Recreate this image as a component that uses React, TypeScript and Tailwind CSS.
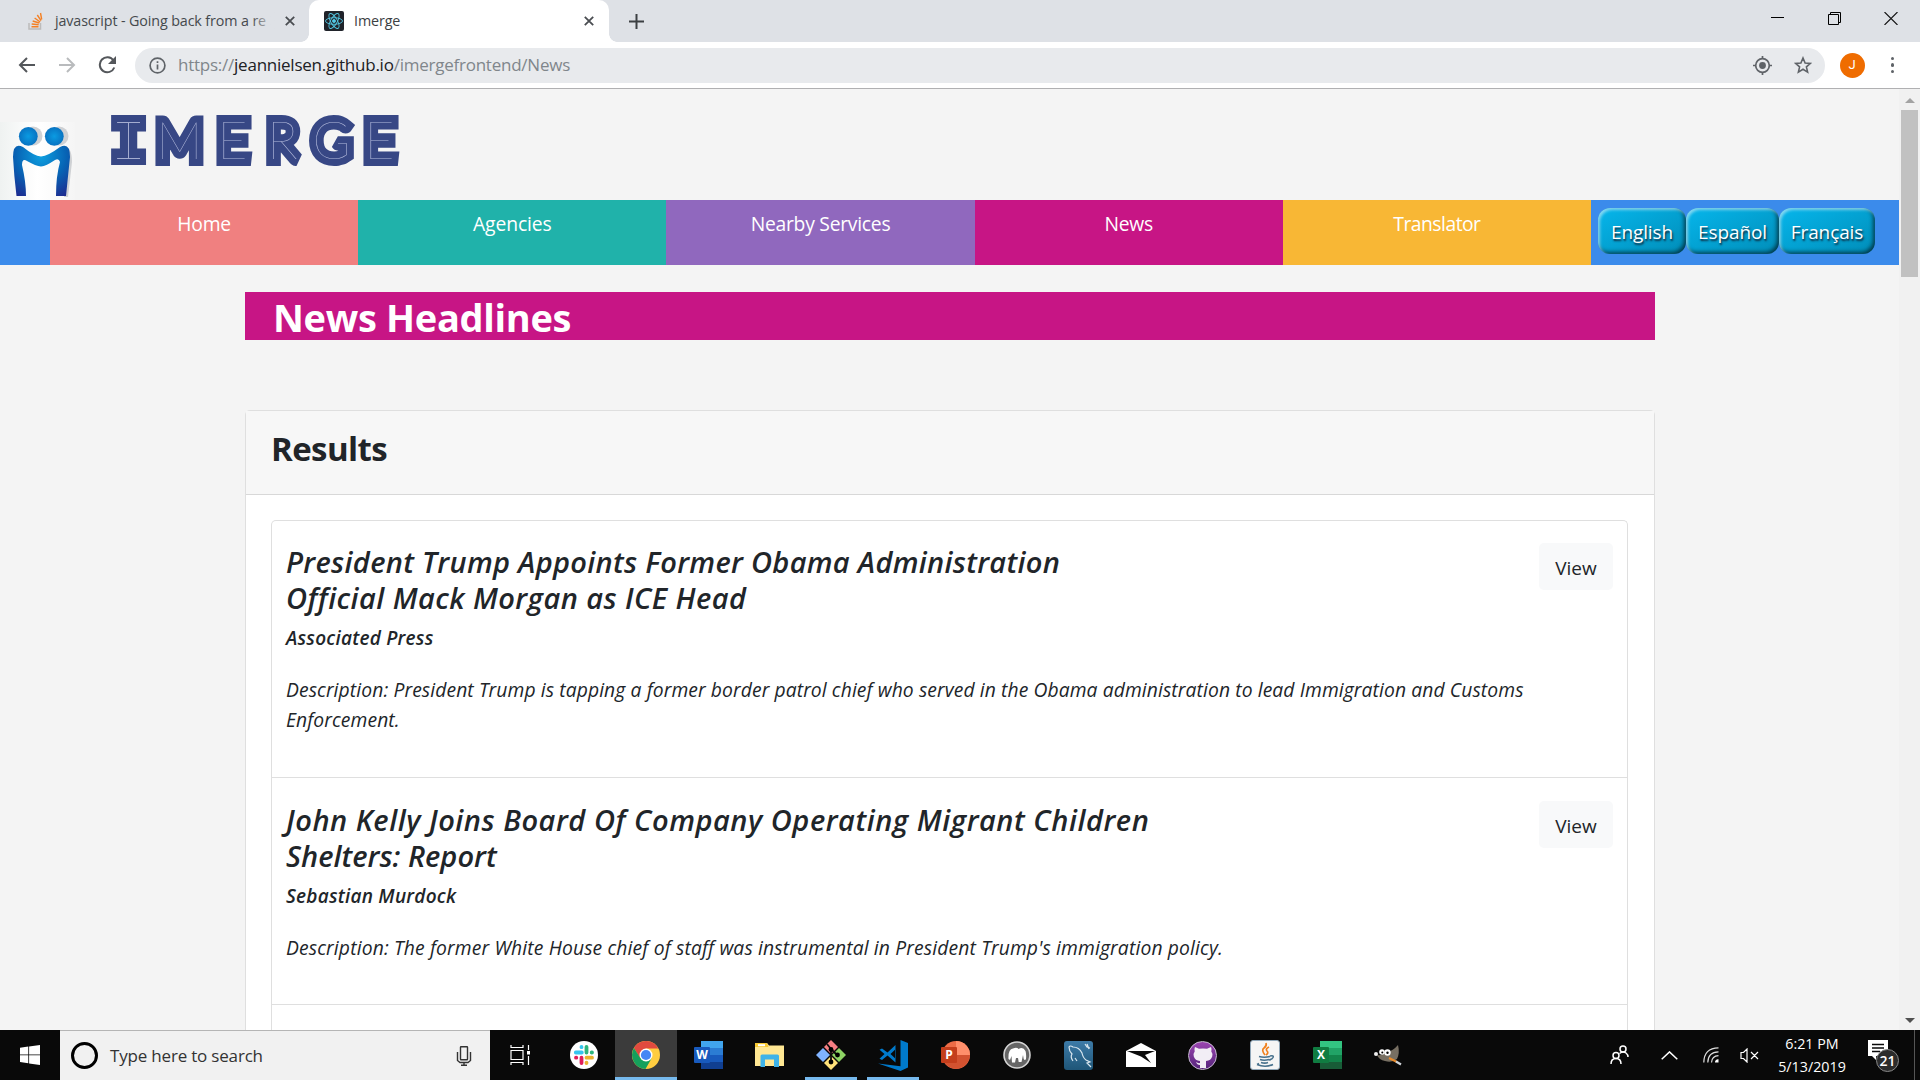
import type { ReactNode } from "react";

function CloseX() {
  return (
    <svg width="10" height="10" viewBox="0 0 10 10" stroke="#4a4d51" strokeWidth="1.8">
      <path d="M.8.8l8.4 8.4M9.2.8L.8 9.2" />
    </svg>
  );
}

function TabStrip() {
  return (
    <div className="flex h-[42px] shrink-0 items-stretch bg-[#dee1e6]">
      <div className="flex w-[309px] items-center pl-7">
        <svg width="15" height="18" viewBox="0 0 15 18" fill="none">
          <path d="M1 11v6h11.500v-6" stroke="#bcbbbb" strokeWidth="1.500" />
          <path d="M3.500 14.700h7M3.700 12l7 .8M4.700 9l6.600 2M6.600 6l5.600 4M9.300 3l3.700 5.600M12.500 1l1.200 6.500" stroke="#f48024" strokeWidth="1.400" />
        </svg>
        <div className="relative ml-3 w-[220px] whitespace-nowrap text-[14.300px] tracking-[-0.120px] text-[#45494d]">
          javascript - Going back from a re
          <div className="absolute inset-y-0 right-0 w-6 bg-linear-to-r from-transparent to-[#dee1e6]" />
        </div>
        <div className="ml-[10px]"><CloseX /></div>
      </div>
      <div className="relative flex w-[300px] items-center rounded-t-[10px] bg-white pl-[15px]">
        <i className="absolute right-full bottom-0 size-2 bg-[radial-gradient(circle_at_0_0,transparent_7.500px,white_8px)]" />
        <i className="absolute bottom-0 left-full size-2 bg-[radial-gradient(circle_at_100%_0,transparent_7.500px,white_8px)]" />
        <svg width="20" height="20" viewBox="0 0 20 20" fill="none" stroke="#53c7e3" strokeWidth=".9">
          <rect width="20" height="20" rx="2" fill="#20232a" stroke="none" />
          <ellipse cx="10" cy="10" rx="8.500" ry="3.300" />
          <ellipse cx="10" cy="10" rx="8.500" ry="3.300" transform="rotate(60 10 10)" />
          <ellipse cx="10" cy="10" rx="8.500" ry="3.300" transform="rotate(120 10 10)" />
          <circle cx="10" cy="10" r="1.500" fill="#53c7e3" />
        </svg>
        <span className="ml-[10px] flex-1 text-[14.300px] tracking-[-0.100px] text-[#3c4043]">Imerge</span>
        <div className="mr-[15px]"><CloseX /></div>
      </div>
      <div className="flex flex-1 items-center pl-[20px]">
        <svg width="15" height="15" viewBox="0 0 15 15" stroke="#3c4043" strokeWidth="2"><path d="M7.500 0v15M0 7.500h15" /></svg>
      </div>
      <div className="flex items-start gap-[43px] pr-[22px] pt-3">
        <svg className="-ml-px" width="14" height="13" viewBox="0 0 14 13" stroke="#000"><path d="M0 5.500h13" /></svg>
        <svg width="13" height="13" viewBox="0 0 13 13" fill="none" stroke="#000"><path d="M.5 2.500h10v10h-10zM2.500 2.500v-2h10v10h-2" /></svg>
        <svg width="14" height="13" viewBox="0 0 14 13" stroke="#111" strokeWidth="1.100"><path d="M.5 0l13 13M13.500 0l-13 13" /></svg>
      </div>
    </div>
  );
}

function Toolbar() {
  return (
    <div className="flex h-[47px] shrink-0 items-center border-b border-[#b0b0b2] bg-white pl-[18px] pr-[26px]">
      <svg width="17" height="16" viewBox="0 0 17 16" fill="none" stroke="#54575b" strokeWidth="2"><path d="M17 8H2M9 1L2 8l7 7" /></svg>
      <svg className="ml-6" width="17" height="16" viewBox="0 0 17 16" fill="none" stroke="#b9bbbd" strokeWidth="2"><path d="M0 8h15M8 1l7 7-7 7" /></svg>
      <svg className="ml-[22px]" width="19" height="18" viewBox="0 0 19 18" fill="none" stroke="#54575b" strokeWidth="2">
        <path d="M15.500 4.500A7.500 7.500 0 1 0 16.300 11.500" />
        <path d="M18 0v8h-8z" fill="#54575b" stroke="none" />
      </svg>
      <div className="ml-[18px] flex h-[35px] flex-1 items-center rounded-full bg-[#e8eaed] pl-[14px] pr-[13px]">
        <svg width="17" height="17" viewBox="0 0 17 17" fill="none" stroke="#5f6368" strokeWidth="1.700">
          <circle cx="8.500" cy="8.500" r="7.400" /><path d="M8.500 7.500v5M8.500 4.200v1.900" />
        </svg>
        <span className="ml-3 flex-1 text-[17px] tracking-[-0.240px] text-[#80868b]">
          https://<span className="text-[#202124]">jeannielsen.github.io</span>/imergefrontend/News
        </span>
        <svg width="19" height="19" viewBox="0 0 19 19" fill="none" stroke="#5f6368" strokeWidth="1.700">
          <circle cx="9.500" cy="9.500" r="6.800" /><circle cx="9.500" cy="9.500" r="3.400" fill="#5f6368" stroke="none" />
          <path d="M9.500 0v3M9.500 16v3M0 9.500h3M16 9.500h3" />
        </svg>
        <svg className="ml-[22px]" width="18" height="18" viewBox="0 0 18 18" fill="none" stroke="#5f6368" strokeWidth="1.600">
          <path d="M9 2l2.100 5 5.300.4-4 3.500 1.200 5.200L9 13.300l-4.600 2.800 1.200-5.200-4-3.500 5.300-.4z" />
        </svg>
      </div>
      <div className="ml-[15px] flex size-[25px] items-center justify-center rounded-full bg-[#ef6c00] font-['Roboto'] text-[13px] text-white">J</div>
      <div className="ml-[26px] flex flex-col gap-[3px]">
        <i className="size-[3.500px] rounded-full bg-[#5f6368]" />
        <i className="size-[3.500px] rounded-full bg-[#5f6368]" />
        <i className="size-[3.500px] rounded-full bg-[#5f6368]" />
      </div>
    </div>
  );
}

function PeopleLogo() {
  return (
    <svg className="mt-[33px] block" width="75" height="78" viewBox="0 0 75 78">
      <defs>
        <linearGradient id="paper"><stop offset="0" stopColor="#eff2f1" /><stop offset=".5" stopColor="#fff" /><stop offset="1" stopColor="#f5f5f5" /></linearGradient>
        <radialGradient id="head"><stop offset="0" stopColor="#0a9be2" /><stop offset="1" stopColor="#0873c2" /></radialGradient>
        <radialGradient id="body" gradientUnits="userSpaceOnUse" cx="41" cy="34" r="46"><stop offset="0" stopColor="#0d9fe0" /><stop offset=".55" stopColor="#0763b4" /><stop offset="1" stopColor="#1d2b90" /></radialGradient>
      </defs>
      <rect width="75" height="78" fill="url(#paper)" />
      <g fill="#cfd1d4">
        <circle cx="33" cy="14" r="9.500" /><circle cx="59" cy="14" r="9.500" />
        <path d="M62 24q10-1 10 16l-4 35h-4z" />
      </g>
      <circle cx="28.300" cy="14.300" r="9.400" fill="url(#head)" />
      <circle cx="54.300" cy="14.300" r="9.400" fill="url(#head)" />
      <path d="M13 35Q13 20 23 25Q34 34 41 34.500Q48 34 60 25Q70 20 70 35Q68 54 66 74H56Q56 54 60 40Q59 36 55 38Q46 44 41 44.500Q36 44 27 39Q22 36 22 43Q26 60 26 74H16.500Q14 54 13 35z" fill="url(#body)" />
    </svg>
  );
}

const LETTERS: [string, number][] = [["M", 179.5], ["E", 232.5], ["R", 282.5], ["G", 331.5], ["E", 379.5]];

function Wordmark() {
  return (
    <svg className="block" width="320" height="80" viewBox="100 96 320 80" fontFamily="Lato" fontWeight="100" fontSize="51.500" fill="#b5bcdd" stroke="#374785" strokeWidth="14" strokeMiterlimit="2" paintOrder="stroke" textAnchor="middle">
      <defs>
        <pattern id="inline" patternUnits="userSpaceOnUse" x="100" y="96" width="320" height="80">
          <rect width="320" height="80" fill="#374785" stroke="none" />
          <path d="M28.500 26v37M17 26.500h23M17 62.500h23" stroke="#a4acd0" strokeWidth="1" />
        </pattern>
      </defs>
      <text x="128.500" y="159" fontFamily="Liberation Mono" fontWeight="400" fontSize="57" fill="url(#inline)" strokeWidth="12">I</text>
      {LETTERS.map(([c, x], i) => <text key={i} x={x} y="159">{c}</text>)}
    </svg>
  );
}

const NAV = [
  { label: "Home", style: "bg-[#f08080] tracking-[-0.250px]" },
  { label: "Agencies", style: "bg-[#20b2aa] tracking-[-0.100px]" },
  { label: "Nearby Services", style: "bg-[#9068be] tracking-[-0.250px]" },
  { label: "News", style: "bg-[#c71585] tracking-[-0.250px]" },
  { label: "Translator", style: "bg-[#f8b735] tracking-[-0.500px]" },
];

const LANGS = [
  { label: "English", w: "w-[88px]" },
  { label: "Español", w: "w-[93px]" },
  { label: "Français", w: "w-[96px]" },
];

const ARTICLES = [
  {
    title: [
      { t: "President Trump Appoints Former Obama Administration", tracking: "tracking-[0.310px]" },
      { t: "Official Mack Morgan as ICE Head", tracking: "tracking-[0.430px]" },
    ],
    author: "Associated Press",
    text: ["Description: President Trump is tapping a former border patrol chief who served in the Obama administration to lead Immigration and Customs", "Enforcement."],
    box: "h-[257px] pt-[22px]",
    textTracking: "tracking-[0.095px]",
  },
  {
    title: [
      { t: "John Kelly Joins Board Of Company Operating Migrant Children", tracking: "tracking-[0.530px]" },
      { t: "Shelters: Report", tracking: "tracking-[0.020px]" },
    ],
    author: "Sebastian Murdock",
    text: ["Description: The former White House chief of staff was instrumental in President Trump's immigration policy."],
    box: "h-[227px] pt-[23px]",
    textTracking: "tracking-[0.140px]",
  },
];

function Page() {
  return (
    <div className="flex min-h-0 flex-1 bg-[#f4f4f4]">
      <main className="flex min-w-0 flex-1 flex-col overflow-hidden">
        <header className="flex h-[111px] shrink-0">
          <PeopleLogo />
          <div className="ml-[25px] pt-[7px]"><Wordmark /></div>
        </header>
        <nav className="flex h-[65px] shrink-0 bg-[#3b8beb] pl-[50px] text-white">
          {NAV.map((n) => (
            <a key={n.label} className={"flex-1 pt-[10px] text-center text-[19.300px] leading-[28px] " + n.style}>{n.label}</a>
          ))}
          <div className="flex w-[308px] pl-[7px] pt-2">
            {LANGS.map((l) => (
              <button key={l.label} className={"h-[46px] rounded-[12px] bg-linear-to-br from-[#06b6ec] to-[#018db8] pt-[3px] text-[19px] tracking-[-0.100px] [text-shadow:1px_2px_2px_#123] shadow-[inset_2px_2px_3px_rgba(255,255,255,.5),inset_-2px_-2px_4px_rgba(0,0,0,.6)] " + l.w}>
                {l.label}
              </button>
            ))}
          </div>
        </nav>
        <h1 className="ml-[245px] mt-[27px] h-12 w-[1410px] shrink-0 bg-[#c71585] pl-7 text-[38px] leading-[51px] font-bold tracking-[-0.320px] text-white">News Headlines</h1>
        <section className="ml-[245px] mt-[70px] w-[1410px] flex-1 rounded-t-[5px] border border-b-0 border-[#dfdfdf] bg-white">
          <h2 className="h-[84px] border-b border-[#d8d8d8] bg-[#f7f7f7] pl-[25px] pt-[14px] text-[33px] leading-[48px] font-bold tracking-[-0.600px] text-[#212529]">Results</h2>
          <ul className="ml-[25px] mt-[25px] h-[520px] w-[1357px] rounded-t-[5px] border border-b-0 border-[#dfdfdf] text-[#212529] italic">
            {ARTICLES.map((a) => (
              <li key={a.author} className={"flex items-start justify-between border-b border-[#dfdfdf] px-[14px] whitespace-nowrap " + a.box}>
                <div className="pt-px">
                  <h3 className="text-[29px] leading-9 font-semibold">{a.title.map((l) => <span key={l.t} className={"block w-fit " + l.tracking}>{l.t}</span>)}</h3>
                  <h4 className="mt-[10px] w-fit text-[19px] leading-6 font-semibold tracking-[0.230px]">{a.author}</h4>
                  <p className={"mt-[25px] text-[19.300px] leading-[30px] " + a.textTracking}>{a.text.map((t) => <span key={t} className="block w-fit">{t}</span>)}</p>
                </div>
                <button className="-ml-20 h-[47px] w-[74px] shrink-0 rounded-[5px] bg-[#f8f9fa] pt-[3px] text-[19px] not-italic">View</button>
              </li>
            ))}
          </ul>
        </section>
      </main>
      <aside className="flex w-[21px] flex-col items-center justify-between bg-[#f1f1f1]">
        <div className="flex flex-col items-center pt-[9px]">
          <svg width="10" height="5" viewBox="0 0 10 5" fill="#a3a3a3"><path d="M0 5l5-5 5 5z" /></svg>
          <div className="mt-[7px] h-[167px] w-[17px] bg-[#c1c1c1]" />
        </div>
        <svg className="mb-[7px]" width="10" height="5" viewBox="0 0 10 5" fill="#505050"><path d="M0 0l5 5 5-5z" /></svg>
      </aside>
    </div>
  );
}

function Office({ letter, dark, shades, round }: { letter: string; dark: string; shades: string[]; round?: boolean }) {
  return (
    <svg width="30" height="30" viewBox="0 0 30 30">
      {round ? (
        <>
          <circle cx="16" cy="15" r="14" fill={shades[1]} />
          <path d="M16 1a14 14 0 0 1 14 14H16z" fill={shades[0]} />
          <path d="M30 15a14 14 0 0 1-27 5l13-5z" fill={shades[2]} />
        </>
      ) : (
        shades.map((s, i) => <rect key={s} x="8" y={1 + i * 7} width="22" height="7" fill={s} />)
      )}
      <rect x="1" y="7" width="16" height="16" rx="1" fill={dark} />
      <text x="9" y="19.300" textAnchor="middle" fontFamily="Open Sans" fontWeight="700" fontSize="12" fill="#fff">{letter}</text>
    </svg>
  );
}

function Slack() {
  return (
    <svg width="28" height="28" viewBox="0 0 28 28">
      <circle cx="14" cy="14" r="14" fill="#fff" />
      <g strokeWidth="3.800" strokeLinecap="round">
        <path d="M5.800 11.500h6M11.500 5.900v.3" stroke="#36c5f0" />
        <path d="M16.500 6v5.500M22 11.500h-.3" stroke="#2eb67d" />
        <path d="M16.500 16.700H22M16.500 22v-.3" stroke="#ecb22e" />
        <path d="M11.500 16.700V22M6 16.700h.3" stroke="#e01e5a" />
      </g>
    </svg>
  );
}

function Chrome() {
  return (
    <svg width="28" height="28" viewBox="0 0 28 28">
      <circle cx="14" cy="14" r="14" fill="#ffcd40" />
      <path d="M14 7.500h12.400A14 14 0 0 0 1.900 7L8 17z" fill="#e04a3f" />
      <path d="M1.900 7A14 14 0 0 0 13.500 28l6-10.500L8.300 17z" fill="#15a05c" />
      <circle cx="14" cy="14" r="6.500" fill="#fff" /><circle cx="14" cy="14" r="5.100" fill="#4587f4" />
    </svg>
  );
}

const APPS: { id: string; icon: ReactNode; state?: "active" | "open" }[] = [
  { id: "tasks", icon: <svg className="mr-[3px]" width="21" height="20" viewBox="0 0 21 20" fill="none" stroke="#fff" strokeWidth="1.200"><path d="M1 5.500h12v9H1zM1 0v2.500h12V0M1 20v-2.500h12V20M18.500 0v5M18.500 11v9" /><path d="M17 6h3v3.500h-3z" fill="#fff" stroke="none" /></svg> },
  { id: "slack", icon: <Slack /> },
  { id: "chrome", icon: <Chrome />, state: "active" },
  { id: "word", icon: <Office letter="W" dark="#185abd" shades={["#41a5ee", "#2b7cd3", "#185abc", "#103f91"]} /> },
  {
    id: "files",
    icon: (
      <svg width="29" height="26" viewBox="0 0 29 26">
        <path d="M0 1h12l2 2.500h15V24H0z" fill="#ffe793" /><path d="M0 1h12l1.500 4H0z" fill="#f8c932" /><path d="M3 2.200h7v2H3z" fill="#fff" />
        <path d="M5.500 14q0-1.500 1.500-1.500h15.500q1.500 0 1.500 1.500v11h-5v-7.500H10V25H5.500z" fill="#3fb3e8" />
      </svg>
    ),
  },
  {
    id: "git",
    state: "open",
    icon: (
      <svg width="32" height="32" viewBox="0 0 32 32">
        <path d="M16 1l7 7-7 7-7-7z" fill="#f57e82" /><path d="M8 9l7 7-7 7-7-7z" fill="#80b3ff" />
        <path d="M24 9l7 7-7 7-7-7z" fill="#8ed464" /><path d="M16 17l7 7-7 7-7-7z" fill="#ffe27a" />
        <path d="M12 5l4 5v14M16 10l6 6" stroke="#0c0c0c" strokeWidth="1.800" fill="none" />
        <circle cx="16" cy="10.500" r="2.400" /><circle cx="22.500" cy="16" r="2.400" /><circle cx="16" cy="23" r="2.400" />
      </svg>
    ),
  },
  {
    id: "code",
    state: "open",
    icon: (
      <svg width="30" height="31" viewBox="0 0 30 31" fill="#007acc">
        <path d="M22.500 0L30 3v24.500L22.500 31 0 23.500l22.500 2.700z" />
        <path d="M1.500 9.800L4 8.500l5.500 4L17.500 5v17.500L9.500 15.500 4 20l-2.500-1.300L6.500 14zM17 9.800L12.500 14l4.500 4.200z" fillRule="evenodd" />
      </svg>
    ),
  },
  { id: "ppt", icon: <Office round letter="P" dark="#c43e1c" shades={["#ff8f6b", "#ed6c47", "#d35230"]} /> },
  {
    id: "mamp",
    icon: (
      <svg width="28" height="28" viewBox="0 0 28 28">
        <circle cx="14" cy="14" r="13" fill="#666" stroke="#d5d5d5" strokeWidth="1.600" />
        <path d="M5.500 18Q5 8 10 7.500q4-1.500 5.500.5Q20 5 22.500 10q1 3 .5 8-1 2-2.300 0L20 14l-1.500 7h-2.800L15 17l-2 0-1 4.500H9L8.500 15 7 19z" fill="#fff" />
      </svg>
    ),
  },
  { id: "mysql", icon: <div className="flex size-[29px] items-center justify-center rounded-[3px] bg-linear-to-b from-[#3d7ba8] to-[#1f5678]">
    <svg width="27" height="27" viewBox="0 0 27 27" fill="none" stroke="#dbe8f0" strokeWidth="1.200"><path d="M8 19q-3-4-1-7-3-3-3-7 1-2 4 0 6 0 9 6 1 5 4 7l4 2-3 1 4 4M10 16l2 3M20 2l2 3 3 1M22 2l2 5" /></svg>
  </div> },
  { id: "mail", icon: <svg width="30" height="24" viewBox="0 0 30 24"><path d="M0 8L15 0l15 8v16H0z" fill="#fff" /><path d="M1 8h28l-10 4 6 8-10-6.500z" fill="#0b0b0b" /></svg> },
  { id: "github", icon: <div className="flex size-[29px] items-center justify-center rounded-full border-[1.500px] border-[#c9bcd3] bg-linear-to-b from-[#9b45b0] to-[#57247c]">
    <svg width="24" height="26" viewBox="0 0 24 26" fill="#f2eef5"><path d="M4 5l4 1.800q4-.8 8 0L20 5q1 2 .3 4.500 1.700 2 .9 5Q20 18.500 15 19v7H9v-3q-3 0-4-3 2 1.500 4 1V19q-5-.5-6.200-4.500-.8-3 .9-5Q3 7 4 5z" /></svg>
  </div> },
  { id: "java", icon: <div className="flex size-[30px] items-center justify-center rounded-[3px] border border-[#8fa6b8] bg-[#f5f5f5]">
    <svg width="22" height="26" viewBox="0 0 22 26" fill="none"><path d="M12 1q1 3-2 5t1 7M15 5q-4 2-2 4t-1 4" stroke="#f0801d" strokeWidth="1.700" /><path d="M5 14.500q5 1.500 11 0M16 14q4-1 3 1.500-1 2-4 2.500M6 17.500q4 1.500 9 0M7 20.500q4 1.200 7 0M3 22.500q8 3.500 16 0M3 22.500l2-1" stroke="#46708c" strokeWidth="1.600" /></svg>
  </div> },
  { id: "excel", icon: <Office letter="X" dark="#107c41" shades={["#33c481", "#21a366", "#12834a", "#185c37"]} /> },
  {
    id: "gimp",
    icon: (
      <svg width="28" height="22" viewBox="0 0 28 22">
        <path d="M3 11q6 1 9-4 5 2 12-6 2 8-1 14-5 4-12 2-6-1-8-6z" fill="#776f62" />
        <circle cx="2" cy="10" r="2" fill="#eee" /><circle cx="8" cy="8" r="2.800" fill="#fff" /><circle cx="13.500" cy="8.500" r="3.200" fill="#fff" />
        <circle cx="8.300" cy="8.500" r="1" /><circle cx="13.500" cy="8.800" r="1.200" />
        <path d="M15 14l8 4" stroke="#e88b2c" strokeWidth="2" /><path d="M22 17.500l5 3" stroke="#cfd3d8" strokeWidth="2.200" />
      </svg>
    ),
  },
];

function Taskbar() {
  return (
    <footer className="flex h-[50px] shrink-0 items-stretch bg-[#090909] text-white">
      <div className="flex w-[60px] items-center justify-center">
        <svg width="20" height="20" viewBox="0 0 20 20" fill="#fff"><path d="M0 2.800L8.300 1.600v7.900H0zM9.100 1.500L20 0v9.500H9.100zM0 10.300h8.300v7.900L0 17zM9.100 10.300H20V20L9.100 18.400z" /></svg>
      </div>
      <div className="flex w-[430px] items-center border-t border-[#b5b5b5] bg-[#f1f1f1] pl-[11px] pr-[18px]">
        <div className="size-[27px] rounded-full border-[3.500px] border-black" />
        <span className="ml-3 flex-1 text-[17px] tracking-[-0.190px] text-[#333]">Type here to search</span>
        <svg width="16" height="20" viewBox="0 0 16 20" fill="none" stroke="#333" strokeWidth="1.400"><rect x="4.500" y=".7" width="7" height="13" rx=".5" /><path d="M1.500 6v8.500l2.500 2h8l2.500-2V6M8 16.500V19M5 19.200h6" /></svg>
      </div>
      <div className="flex pl-px">
        {APPS.map((a) => (
          <div key={a.id} className={"relative flex w-[61.900px] items-center justify-center " + (a.state === "active" ? "bg-[#3b3b3b]" : "")}>
            {a.icon}
            {a.state === "active" && <div className="absolute inset-x-0 bottom-0 h-[3px] bg-[#76b9ed]" />}
            {a.state === "open" && <div className="absolute inset-x-[5px] bottom-0 h-[3px] bg-[#76b9ed]" />}
          </div>
        ))}
      </div>
      <div className="flex flex-1 items-center justify-end">
        <svg width="19" height="20" viewBox="0 0 19 20" fill="none" stroke="#fff" strokeWidth="1.500"><circle cx="6" cy="10.500" r="3" /><circle cx="13" cy="4" r="3" /><path d="M1 19q0-5.500 5-5.500t5 5.500M9.500 8.500q3.500-2.500 6.500-.5 2 1.500 2 4" /></svg>
        <svg className="ml-8" width="17" height="9" viewBox="0 0 17 9" fill="none" stroke="#fff" strokeWidth="1.500"><path d="M.7 8.300L8.500.9l7.800 7.400" /></svg>
        <svg className="ml-[25px]" width="16" height="16" viewBox="0 0 16 16" fill="none" stroke="#ddd" strokeWidth="1.200"><path d="M.8 15.500Q1 1 15.500.8M4.800 15.500Q5 5 15.500 4.800M8.500 15.500Q9 9 15.500 8.700" /><path d="M12 15.500a3 3 0 0 1 3.500-3.300v3.300z" fill="#fff" stroke="none" /></svg>
        <svg className="ml-[21px]" width="19" height="15" viewBox="0 0 19 15" fill="none" stroke="#fff" strokeWidth="1.200"><path d="M1 4.500h2.500L7 1v13L3.500 10.500H1zM11 4l7 7M18 4l-7 7" /></svg>
        <div className="ml-[13px] w-[80px] text-center text-[14.300px] leading-[23px]"><div>6:21 PM</div><div>5/13/2019</div></div>
        <div className="relative ml-4 h-[30px] w-[32px] self-center">
          <svg width="21" height="20" viewBox="0 0 21 20"><path d="M0 0h20v16H8v4l-4-4H0z" fill="#fff" /><path d="M4 4.500h12M4 8h12M4 11.500h8" stroke="#090909" strokeWidth="1.300" /></svg>
          <div className="absolute left-2 top-[9px] flex size-[23px] items-center justify-center rounded-full border border-[#888] bg-[#2c2c2c] text-[14px] font-semibold">21</div>
        </div>
        <div className="ml-[14px] mr-[5px] h-full w-px bg-[#555]" />
      </div>
    </footer>
  );
}

export default function App() {
  return (
    <div className="flex h-[1080px] w-[1920px] flex-col overflow-hidden font-['Open_Sans',sans-serif]">
      <TabStrip />
      <Toolbar />
      <Page />
      <Taskbar />
    </div>
  );
}
